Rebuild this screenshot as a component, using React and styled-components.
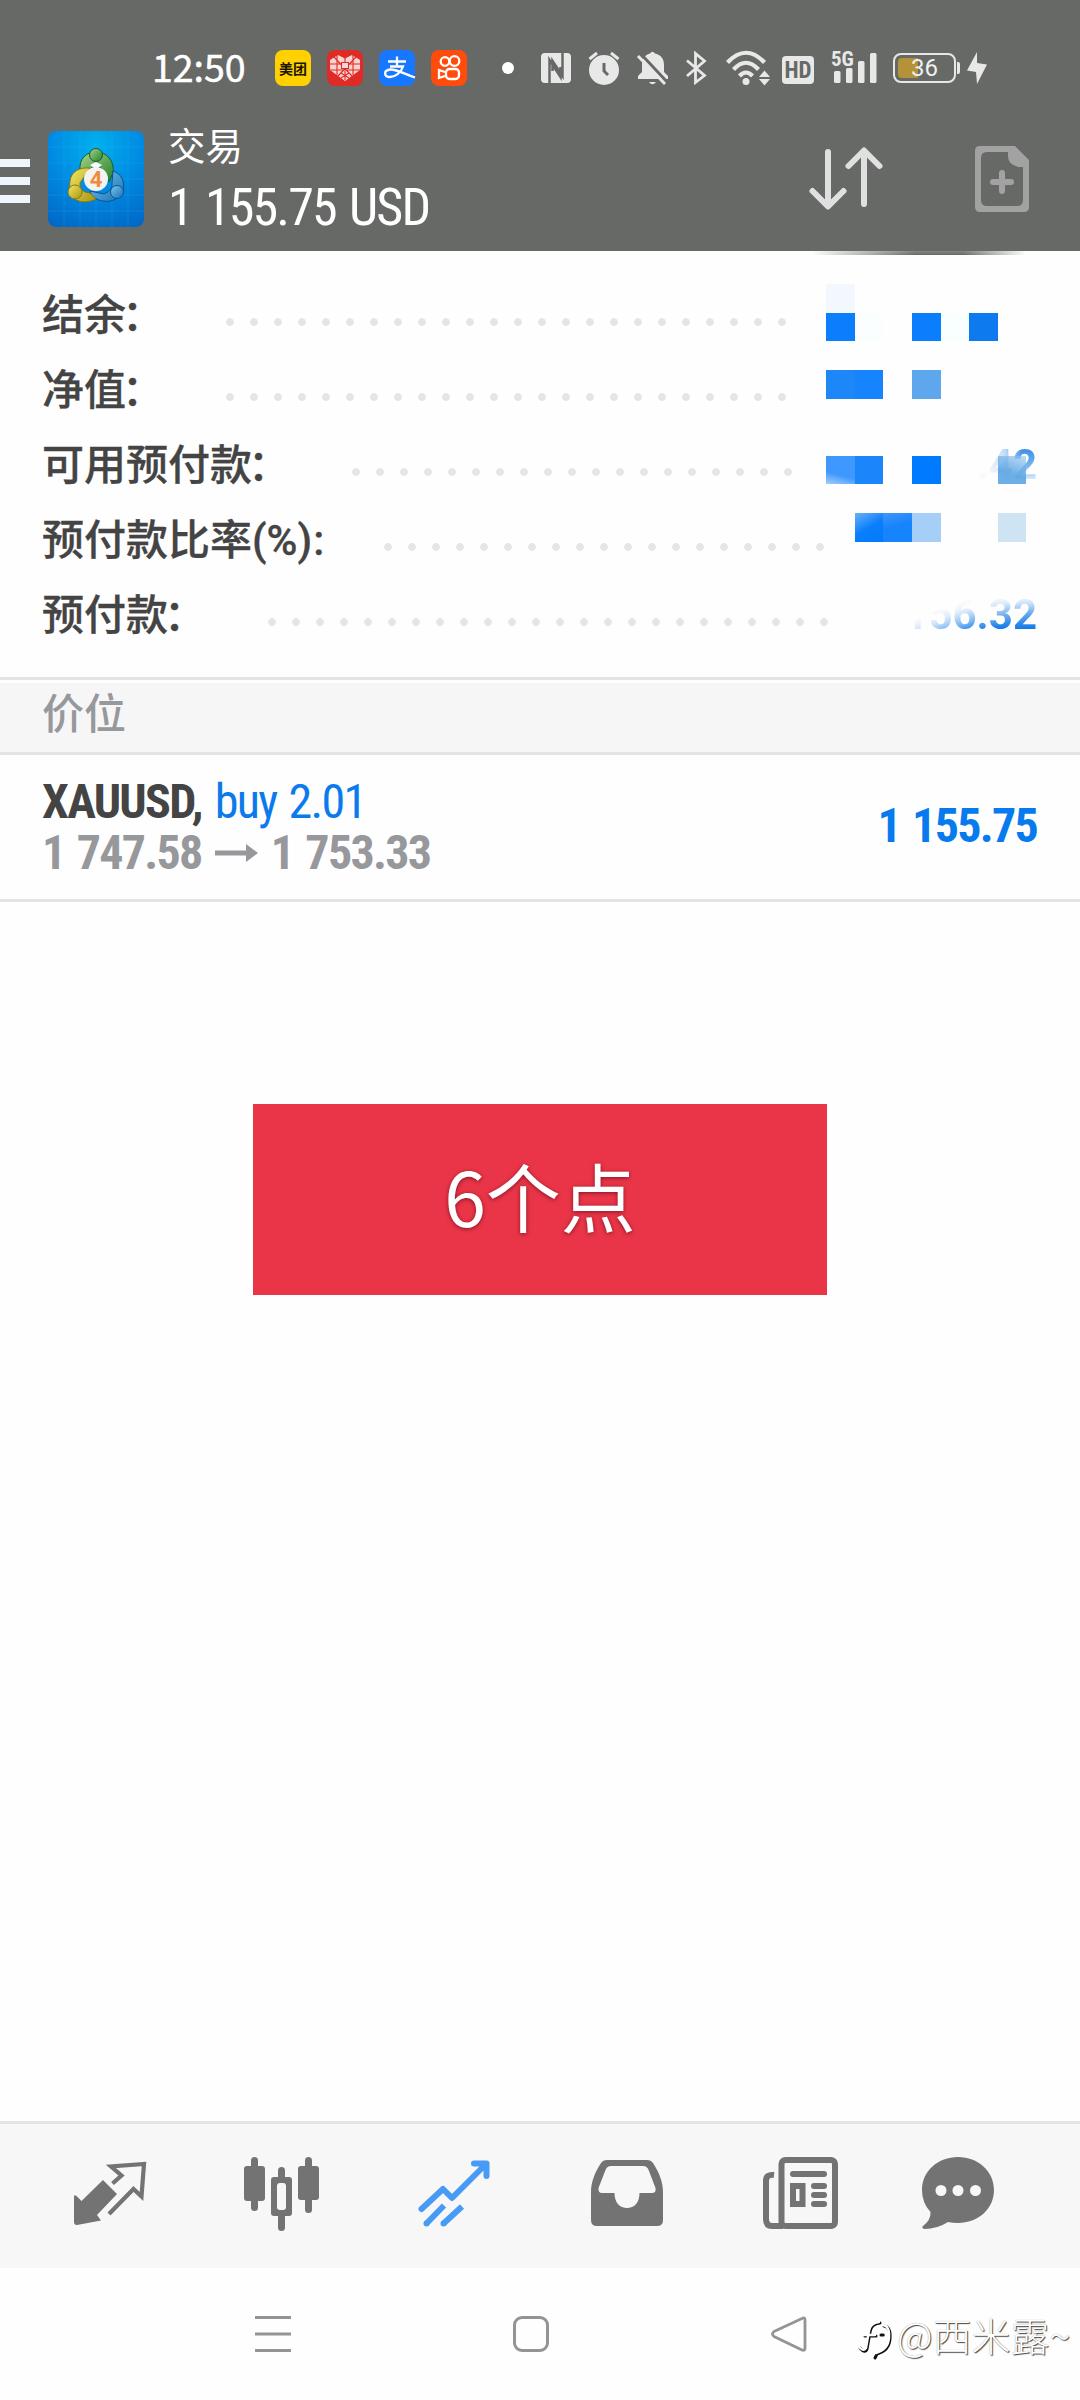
import React from 'react';
import styled, { createGlobalStyle } from 'styled-components';

const summary = [
    { label: '结余', colon: '：', dots: 24 },
    { label: '净值', colon: '：', dots: 24 },
    { label: '可用预付款', colon: '：', dots: 19, value: '.42', fade: 'down' },
    { label: '预付款比率(%)', colon: ':', dots: 19 },
    { label: '预付款', colon: '：', dots: 24, value: '156.32', fade: 'up' },
];

// Censor blocks over the amounts, column and row on a 28.6px grid
const blocks = [
    { col: 1, row: 1, color: '#f2f8fd' },
    { col: 1, row: 2, color: '#0a7efd' },
    { col: 2, row: 2, color: '#fbfefe' },
    { col: 4, row: 2, color: '#0a7efd' },
    { col: 5, row: 2, color: '#f9feff' },
    { col: 6, row: 2, color: '#0d7af0' },
    { col: 1, row: 4, color: '#1d87f8' },
    { col: 2, row: 4, color: '#1684ff' },
    { col: 4, row: 4, color: '#5ea7ec' },
    { col: 1, row: 7, color: 'linear-gradient(15deg, #a5cffb 0%, #3f98fd 35%, #3f98fd 100%)' },
    { col: 2, row: 7, color: '#1b86fc' },
    { col: 4, row: 7, color: '#007afe' },
    { col: 7, row: 7, color: 'linear-gradient(200deg, rgba(150, 198, 240, 0.6), rgba(84, 160, 226, 0.85) 60%)' },
    { col: 2, row: 9, color: 'linear-gradient(150deg, #6db1f8 0%, #0a7ffc 50%, #007afd 100%)' },
    { col: 3, row: 9, color: 'linear-gradient(165deg, #3f97f8 0%, #1684fd 45%)' },
    { col: 4, row: 9, color: '#a6cff7' },
    { col: 7, row: 9, color: '#cfe4f2' },
];

function StatusIcons() {
    return (
        <>
            <Icon $w={30} $h={30} $gap={27} viewBox="0 0 30 30">
                <rect width="30" height="30" rx="4" fill="#e8e8e8" />
                <path d="M8.500 30V7l11 17V14M21.500 0V23L11.500 8V18" fill="none" stroke="#676966" strokeWidth="2.500" />
            </Icon>
            <Icon $w={32} $h={34} $gap={17} viewBox="0 0 32 34">
                <circle cx="16" cy="19" r="15" fill="#e8e8e8" />
                <path d="M1.500 8 9 2M30.500 8 23 2" stroke="#e8e8e8" strokeWidth="3" />
                <path d="M16 12v8l4 4" fill="none" stroke="#676966" strokeWidth="3" />
            </Icon>
            <Icon $w={31} $h={34} $gap={17} viewBox="0 0 31 34">
                <path d="M13 2.500Q15.500-1 18 2.500C25 4 27 9 27 14V21L31 25V28H1V25L5 21V14C5 9 7 4 13 2.500ZM12 31H19Q15.500 35.500 12 31Z" fill="#e8e8e8" />
                <path d="M3 2 31 32" stroke="#676966" strokeWidth="3" />
                <path d="M1 5 28 33" stroke="#e8e8e8" strokeWidth="3" />
            </Icon>
            <Icon $w={21} $h={34} $gap={18} viewBox="0 0 21 34">
                <path d="M1 9.500 18.500 24.500 9.500 31.500V2.500L18.500 10 1 25" fill="none" stroke="#e8e8e8" strokeWidth="2.800" />
            </Icon>
            <Icon $w={44} $h={36} $gap={19} viewBox="0 0 44 36">
                <g fill="none" stroke="#e8e8e8" strokeWidth="4.200">
                    <path d="M1.500 12.500Q20-7 38.500 12.500" />
                    <path d="M7.500 19.500Q20 6 32.500 19.500" />
                    <path d="M13.500 26Q20 19 26.500 26" />
                </g>
                <circle cx="20" cy="31.500" r="3.500" fill="#e8e8e8" />
                <path d="M38.500 20.500 44 27H33ZM38.500 35.500 44 29H33Z" fill="#e8e8e8" />
            </Icon>
            <HdBadge>HD</HdBadge>
            <Signal>
                <Network>5G</Network>
                <Icon $w={46} $h={34} viewBox="0 0 46 34" fill="#e8e8e8">
                    <rect x="3" y="20" width="6.500" height="12" rx="1.500" />
                    <rect x="15" y="17" width="6.500" height="15" rx="1.500" />
                    <rect x="27" y="10" width="6.500" height="22" rx="1.500" />
                    <rect x="39" y="2" width="6.500" height="30" rx="1.500" />
                </Icon>
            </Signal>
            <Battery><Charge /><span>36</span></Battery>
            <BatteryTip />
            <Icon $w={20} $h={32} $gap={7} viewBox="0 0 20 32">
                <path d="M10 0 0 18.500 9 20 10 32 20 12.500 10 11Z" fill="#e8e8e8" />
            </Icon>
        </>
    );
}

function AppIcons() {
    return (
        <>
            <AppIcon $color="#ffd100">美团</AppIcon>
            <AppIcon $color="#df2b25" $gap={16}>
                <Icon $w={32} $h={28} viewBox="0 0 32 28">
                    <path d="M16 4.500 9 1 1 6V16L16 27 31 16V6L23 1Z" fill="#f8d3d0" />
                    <path d="M1 10H31M1 16H31M5 3 23 22M27 3 9 22M8 1V21M24 1V21M16 4V9M16 17V26M12 24 20 19M20 24 12 19" stroke="#df2b25" strokeWidth="1.100" />
                    <rect x="12.500" y="8.500" width="7" height="6" fill="#f8d3d0" stroke="#df2b25" />
                </Icon>
            </AppIcon>
            <AppIcon $color="#1777ff" $gap={16}>
                <Icon $w={36} $h={36} viewBox="0 0 36 36">
                    <path d="M9 11.500H27M18 6.500V16.500M11 16.500H24C22 23 16 27 11 27C5 27 4 20.500 11 19.500C18 19 25 24 36 27.500" fill="none" stroke="#fff" strokeWidth="2.300" />
                </Icon>
            </AppIcon>
            <AppIcon $color="#ff4b0b" $gap={16}>
                <Icon $w={36} $h={36} viewBox="0 0 36 36">
                    <g fill="none" stroke="#fff" strokeWidth="2.300">
                        <circle cx="14" cy="11.500" r="4.300" />
                        <circle cx="23.500" cy="11" r="4.800" />
                        <rect x="15" y="19" width="13" height="10" rx="3.500" />
                        <path d="M14 22 8 20V28L14 26" />
                    </g>
                </Icon>
            </AppIcon>
        </>
    );
}

function Logo() {
    return (
        <LogoBox>
            <Icon $w={96} $h={96} viewBox="0 0 96 96">
                <defs>
                    <linearGradient id="green" x1="0" y1="0" x2="1" y2="1">
                        <stop offset="0" stopColor="#a6d58b" /><stop offset="1" stopColor="#237f2b" />
                    </linearGradient>
                    <linearGradient id="yellow" x1="0" y1="0" x2="1" y2="1">
                        <stop offset="0" stopColor="#f2ea61" /><stop offset="1" stopColor="#a99216" />
                    </linearGradient>
                    <linearGradient id="blue" x1="0" y1="0" x2="1" y2="1">
                        <stop offset="0" stopColor="#7dc8ef" /><stop offset="1" stopColor="#136fb3" />
                    </linearGradient>
                </defs>
                <path d="M0 16H96M0 32H96M0 48H96M0 64H96M0 80H96M16 0V96M32 0V96M48 0V96M64 0V96M80 0V96" stroke="#42b5f2" strokeOpacity="0.2" />
                <path d="M32 39C31 28 38 21 48 21S67 29 65 42L61 51 55 39Q48 31 41 39L34 43Z" fill="url(#green)" stroke="#12632b" />
                <path d="M65 40C74 43 77 51 75 59C73 67 63 72 55 70C48 69 43 65 42 60L56 63Q65 59 64 52Z" fill="url(#blue)" stroke="#0b5290" />
                <path d="M42 37C31 36 23 41 22 50L21 62C27 72 39 73 48 68L42 62Q31 61 32 52Z" fill="url(#yellow)" stroke="#817515" />
                <circle cx="48" cy="24" r="6.500" fill="url(#green)" stroke="#165d2b" />
                <circle cx="27" cy="61" r="7" fill="url(#yellow)" stroke="#857614" />
                <circle cx="69" cy="61" r="6.500" fill="url(#blue)" stroke="#0b5290" />
                <path d="M42 34 48 31 54 34 48 38Z" fill="#fff" />
                <circle cx="48" cy="48" r="12" fill="#f5f3ef" />
                <text x="48" y="56" textAnchor="middle" fontFamily="Roboto, sans-serif" fontSize="22" fontWeight="700" fill="#ef8c3c">4</text>
            </Icon>
        </LogoBox>
    );
}

function Tabs() {
    return (
        <TabBar>
            <Icon $w={72} $h={64} viewBox="0 0 72 64">
                <path d="M29 18 43 32 23 53 27 58.500 3 63Q0 63 0 60V33.500H2L7.500 39Z" fill="#737373" strokeLinejoin="round" />
                <path d="M38.500 21.500 47.500 13.500 37 4.500 70 2 67.500 34.500 59.500 27 35 52" fill="none" stroke="#737373" strokeWidth="4.200" />
            </Icon>
            <Icon $w={75} $h={76} viewBox="1 0 75 76" fill="#737373">
                <rect x="0" y="10" width="21" height="35" rx="3" />
                <rect x="7" y="1" width="7" height="54" rx="3.500" />
                <rect x="54" y="10" width="21" height="34" rx="3" />
                <rect x="61" y="1" width="7" height="56" rx="3.500" />
                <rect x="34" y="11" width="7" height="64" rx="3.500" />
                <rect x="27" y="21" width="21" height="39" rx="3" />
                <rect x="33" y="27" width="9" height="27" rx="3" fill="#f7f7f7" />
            </Icon>
            <Icon $w={72} $h={68} viewBox="0 0 72 68">
                <g fill="none" stroke="#479bf5" strokeWidth="6" strokeLinejoin="round">
                    <path d="M3.500 49 25 29 34 38 68 4M56 3.500H68.500V16" strokeLinecap="round" />
                    <path d="M8 64 26 45.500M25 64 44 46.500" />
                </g>
                <circle cx="8.500" cy="63.500" r="3" fill="#479bf5" />
                <circle cx="25.500" cy="63.500" r="3" fill="#479bf5" />
            </Icon>
            <Icon $w={72} $h={66} $gap={1} viewBox="0 1 72 66">
                <path
                    fillRule="evenodd"
                    d="M16 0H56Q60 0 62 3C68 12 72 22 72 32V60Q72 66 66 66H6Q0 66 0 60V32C0 22 4 12 10 3Q12 0 16 0ZM20 6Q16 6 14.500 10L7.500 28Q7 33 11 33H23.500C23.500 43 29 48 36 48S48.500 43 48.500 33H61Q65.500 33 64.500 28L58 11Q56.500 6 52 6Z"
                    fill="#737373"
                />
            </Icon>
            <Icon $w={75} $h={72} $gap={4} viewBox="0 1 75 72">
                <g fill="none" stroke="#737373" strokeWidth="6">
                    <rect x="18.500" y="3" width="53.500" height="66" rx="4" />
                    <path d="M11 18Q3 17 3 24V62Q3 69 9 69H20" />
                    <rect x="30" y="29" width="9.500" height="18" />
                </g>
                <g fill="#737373">
                    <rect x="27" y="14" width="37" height="6" rx="3" />
                    <rect x="48" y="26" width="16" height="6" rx="3" />
                    <rect x="48" y="35" width="16" height="6" rx="3" />
                    <rect x="48" y="44" width="16" height="6" rx="3" />
                </g>
            </Icon>
            <Icon $w={72} $h={72} viewBox="0 1 72 72">
                <path d="M36 0C56 0 72 14 72 33S56 66 36 66Q30.500 66 26 65Q15 72 2.500 72Q-1 71 1 69Q9 63 8.500 55Q0 46 0 33C0 14 16 0 36 0Z" fill="#737373" />
                <g fill="#f7f7f7">
                    <circle cx="19" cy="33.500" r="5.500" /><circle cx="36" cy="33.500" r="5.500" /><circle cx="53.500" cy="33.500" r="5.500" />
                </g>
            </Icon>
        </TabBar>
    );
}

function App() {
    return (
        <Screen>
            <GlobalStyle />
            <StatusBar>
                <Clock>12:50</Clock>
                <AppIcons />
                <MoreDot />
                <StatusIcons />
            </StatusBar>
            <Header>
                <Menu><i /><i /><i /></Menu>
                <Logo />
                <Heading>
                    <h1>交易</h1>
                    <Condensed $size={52}>1 155.75 USD</Condensed>
                </Heading>
                <Actions>
                    <Icon $w={74} $h={66} viewBox="0 0 74 66">
                        <path d="M19 6V60M3.500 45 19 60.500 34.500 45M55 58V5M39.500 20 55 4.500 70.500 20" fill="none" stroke="#e0e0e0" strokeWidth="6" strokeLinecap="round" strokeLinejoin="round" />
                    </Icon>
                    <Icon $w={54} $h={66} $gap={92} viewBox="0 0 54 66">
                        <path fillRule="evenodd" d="M5 0H40L54 14V61Q54 66 49 66H5Q0 66 0 61V5Q0 0 5 0ZM12 6Q6 6 6 12V54Q6 60 12 60H42Q48 60 48 54V21H44Q33 19 33 10V6Z" fill="#a2a2a2" />
                        <path d="M27 27V45M18 36H36" stroke="#a2a2a2" strokeWidth="6" strokeLinecap="round" />
                    </Icon>
                </Actions>
                <HeaderSmudge />
            </Header>

            <Summary>
                {summary.map(({ label, colon, dots, value, fade }) => (
                    <SummaryRow key={label}>
                        <Label>{label}<Colon $wide={colon === '：'}>{colon}</Colon></Label>
                        <Dots $count={dots} />
                        {value && <Value $fade={fade}>{value}</Value>}
                    </SummaryRow>
                ))}
                <Mosaic>
                    {blocks.map((b) => (
                        <Block key={`${b.col}-${b.row}`} $col={b.col} $row={b.row} $color={b.color} />
                    ))}
                </Mosaic>
            </Summary>

            <SectionTitle>价位</SectionTitle>
            <Position>
                <div>
                    <Line>
                        <Condensed $size={48} $bold $color="#444">XAUUSD,</Condensed>
                        <Condensed $size={48} $color="#0a7aec">buy 2.01</Condensed>
                    </Line>
                    <Line>
                        <Condensed $size={48} $bold $color="#97989c">1 747.58</Condensed>
                        <Icon $w={43} $h={18} viewBox="0 0 43 18">
                            <path d="M0 6.500H31V0L43 9 31 18V11.500H0Z" fill="#97989c" />
                        </Icon>
                        <Condensed $size={48} $bold $color="#97989c">1 753.33</Condensed>
                    </Line>
                </div>
                <Profit $size={48} $bold $color="#077aee">1 155.75</Profit>
            </Position>

            <Content>
                <Banner>6个点</Banner>
            </Content>

            <Tabs />
            <SystemNav>
                <Icon $w={36} $h={36} viewBox="0 0 36 36">
                    <path d="M0 1.500H36M0 18H36M0 34.500H36" stroke="#949494" strokeWidth="3" />
                </Icon>
                <Icon $w={36} $h={36} viewBox="0 0 36 36">
                    <rect x="1.500" y="1.500" width="33" height="33" rx="7.500" fill="none" stroke="#949494" strokeWidth="3" />
                </Icon>
                <Icon $w={36} $h={36} viewBox="0 0 36 36">
                    <path d="M31 2.500 3 15.500Q0 18 3 20.500L31 34Q34 35 34 32V4Q34 1 31 2.500Z" fill="none" stroke="#949494" strokeWidth="2.800" strokeLinejoin="round" />
                </Icon>
                <Watermark>
                    <Icon $w={36} $h={42} viewBox="0 -5 36 42">
                        <g fill="none" strokeLinecap="round">
                            <path d="M23 5Q14 6 13 14L10 31Q8 36 3 30M8 18H19M24 17Q27 17 26 17M27 8Q34 9 33 21T20 36L18 40" stroke="#111" strokeWidth="3" />
                            <path d="M22 4Q13 5 12 13L9 30Q7 34 2 29M7 17H18M26 7Q33 8 32 20T19 35" stroke="#fff" strokeWidth="2.400" />
                        </g>
                    </Icon>
                    @西米露~
                </Watermark>
            </SystemNav>
        </Screen>
    );
}

const GlobalStyle = createGlobalStyle`
    * {
        box-sizing: border-box;
    }
    body {
        margin: 0;
        background: #fefefe;
        font-family: 'Noto Sans CJK SC', sans-serif;
    }
`;

const Screen = styled.div`
    display: flex;
    flex-direction: column;
    width: 1080px;
    height: 2400px;
    overflow: hidden;
`;

const Icon = styled.svg`
    display: block;
    flex: none;
    width: ${({ $w }) => $w}px;
    height: ${({ $h }) => $h}px;
    margin-left: ${({ $gap = 0 }) => $gap}px;
    overflow: visible;
`;

const Condensed = styled.span`
    font-family: Roboto, sans-serif;
    font-stretch: 75%;
    font-size: ${({ $size }) => $size}px;
    font-weight: ${({ $bold }) => ($bold ? 700 : 400)};
    line-height: 51px;
    letter-spacing: -0.036em;
    word-spacing: 0.06em;
    color: ${({ $color = '#fff' }) => $color};
    white-space: nowrap;
`;

const Profit = styled(Condensed)`
    margin: -3px 1px 0 0;
`;

const StatusBar = styled.div`
    display: flex;
    align-items: center;
    height: 111px;
    padding: 25px 0 0 152px;
    background: #676966;
`;

const Clock = styled.div`
    width: 123px;
    margin-top: -5px;
    font-size: 37.5px;
    font-weight: 400;
    line-height: 36px;
    color: #fff;
    -webkit-text-stroke: 0.5px #fff;
`;

const AppIcon = styled.div`
    display: flex;
    align-items: center;
    justify-content: center;
    width: 36px;
    height: 36px;
    margin-left: ${({ $gap = 0 }) => $gap}px;
    border-radius: 8px;
    background: ${({ $color }) => $color};
    font-size: 14px;
    font-weight: 700;
    color: #1c1600;
    white-space: nowrap;
`;

const MoreDot = styled.div`
    width: 12px;
    height: 12px;
    margin-left: 35px;
    border-radius: 50%;
    background: #fff;
`;

const HdBadge = styled.div`
    width: 32px;
    height: 28px;
    margin: 4px 0 0 12px;
    border-radius: 4px;
    background: #e8e8e8;
    font: 700 23px/29px Roboto, sans-serif;
    font-stretch: 75%;
    text-align: center;
    color: #676966;
`;

const Signal = styled.div`
    position: relative;
    margin-left: 17px;
`;

const Network = styled.span`
    position: absolute;
    top: -1px;
    left: 0;
    font: 700 21px/18px Roboto, sans-serif;
    font-stretch: 75%;
    color: #e8e8e8;
`;

const Battery = styled.div`
    position: relative;
    width: 63px;
    height: 30px;
    margin-left: 16px;
    border: 2px solid #e8e8e8;
    border-radius: 8px;
    font: 400 24px/27px Roboto, sans-serif;
    text-align: center;
    color: #f0f0f0;
    span {
        position: relative;
    }
`;

const Charge = styled.i`
    position: absolute;
    top: 3px;
    left: 3px;
    width: 20px;
    height: 20px;
    border-radius: 4px 0 0 4px;
    background: #b49237;
`;

const BatteryTip = styled.div`
    width: 3px;
    height: 12px;
    margin-left: 1px;
    border-radius: 0 2px 2px 0;
    background: #e8e8e8;
`;

const Header = styled.header`
    position: relative;
    display: flex;
    align-items: center;
    height: 140px;
    padding-right: 51px;
    background: #676966;
`;

const Menu = styled.div`
    display: flex;
    flex-direction: column;
    gap: 10px;
    width: 30px;
    margin-right: 18px;
    i {
        height: 8px;
        background: #eef5fd;
    }
`;

const LogoBox = styled.div`
    width: 96px;
    height: 96px;
    margin-top: -4px;
    border-radius: 8px;
    overflow: hidden;
    background: radial-gradient(circle at 50% 15%, #00b0ee 0%, #0089e2 50%, #0065c3 100%);
`;

const Heading = styled.div`
    flex: 1;
    padding-left: 24px;
    h1 {
        margin: -7px 0 7px;
        font-size: 37.5px;
        font-weight: 400;
        line-height: 54px;
        color: #fff;
    }
    span {
        display: block;
        line-height: 60px;
    }
`;

const Actions = styled.div`
    display: flex;
    margin-top: -4px;
`;

const HeaderSmudge = styled.div`
    position: absolute;
    top: 140px;
    left: 804px;
    width: 222px;
    height: 4px;
    background: linear-gradient(to right, rgba(103, 105, 102, 0) 3%, #676966 50%, #676966 72%, rgba(103, 105, 102, 0));
    mask-image: linear-gradient(to bottom, rgba(0, 0, 0, 0.8), #000);
`;

const Summary = styled.section`
    position: relative;
    height: 426px;
    padding: 26px 43px 0 42px;
`;

const SummaryRow = styled.div`
    display: flex;
    align-items: center;
    height: 75px;
    font-size: 42px;
    font-weight: 500;
    color: #444;
`;

const Label = styled.span`
    margin-top: -6px;
    font-family: Roboto, 'Noto Sans CJK SC', sans-serif;
    -webkit-text-stroke: 0.3px #444;
`;

const Colon = styled.span`
    margin: ${({ $wide }) => ($wide ? '0 3px 0 -4px' : '0 1px 0 1px')};
`;

const Dots = styled.div`
    width: ${({ $count }) => $count * 24}px;
    height: 8px;
    margin: 15px 0 0 51px;
    background: radial-gradient(circle, #e5e5e5 3.5px, transparent 4.2px) 0 0 / 24px 8px;
`;

const Value = styled.span`
    margin-left: auto;
    font: 700 42px/50px Roboto, sans-serif;
    color: transparent;
    background: ${({ $fade }) => ($fade === 'up'
        ? 'linear-gradient(to bottom, #d6e6f8 22%, #5da3ea 50%, #0a78ea 80%)'
        : 'linear-gradient(to bottom, #3f93e6 20%, #72b2ee 50%, #e4f0fc 82%)')};
    background-clip: text;
    mask-image: ${({ $fade }) => ($fade === 'up'
        ? 'linear-gradient(155deg, transparent 30%, rgba(0, 0, 0, 0.2) 42%, rgba(0, 0, 0, 0.8) 60%, #000 72%)'
        : 'linear-gradient(to right, rgba(0, 0, 0, 0.1) 8%, rgba(0, 0, 0, 0.3) 45%, #000 75%)')};
`;

const Mosaic = styled.div`
    position: absolute;
    top: 33px;
    left: 826px;
    display: grid;
    grid-template: repeat(9, 28.65px) / repeat(7, 28.65px);
`;

const Block = styled.i`
    grid-column: ${({ $col }) => $col};
    grid-row: ${({ $row }) => $row};
    background: ${({ $color }) => $color};
`;

const SectionTitle = styled.h2`
    height: 78px;
    margin: 0;
    padding-left: 42px;
    border: solid #e4e4e4;
    border-width: 3px 0;
    background: #f6f6f6;
    box-shadow: inset 0 3px #fefefe;
    font-size: 42px;
    font-weight: 500;
    line-height: 62px;
    color: #97989c;
`;

const Position = styled.div`
    display: flex;
    align-items: center;
    justify-content: space-between;
    height: 147px;
    padding: 0 42px;
    border-bottom: 3px solid #e4e4e4;
`;

const Line = styled.div`
    display: flex;
    align-items: center;
    gap: 13px;
`;

const Content = styled.main`
    flex: 1;
    padding-top: 202px;
`;

const Banner = styled.div`
    width: 574px;
    height: 191px;
    margin: 0 auto;
    background: #ea3548;
    font-size: 75px;
    line-height: 182px;
    text-align: center;
    text-shadow: 0 1px 4px rgba(60, 0, 10, 0.6);
    color: #fff;
`;

const TabBar = styled.nav`
    display: grid;
    grid-template-columns: repeat(5, 172px) 148px;
    align-items: center;
    justify-items: center;
    height: 147px;
    padding: 0 0 4px 24px;
    border-top: 3px solid #e4e4e4;
    background: #f7f7f7;
`;

const SystemNav = styled.div`
    position: relative;
    display: flex;
    align-items: center;
    gap: 222px;
    height: 132px;
    padding-left: 255px;
`;

const Watermark = styled.div`
    position: absolute;
    top: 44px;
    left: 857px;
    display: flex;
    align-items: center;
    gap: 4px;
    font-size: 39px;
    font-weight: 300;
    line-height: 44px;
    color: #fff;
    text-shadow: 1px 1px 1px #444, 0 0 1px #999;
    white-space: nowrap;
`;

export default App;
